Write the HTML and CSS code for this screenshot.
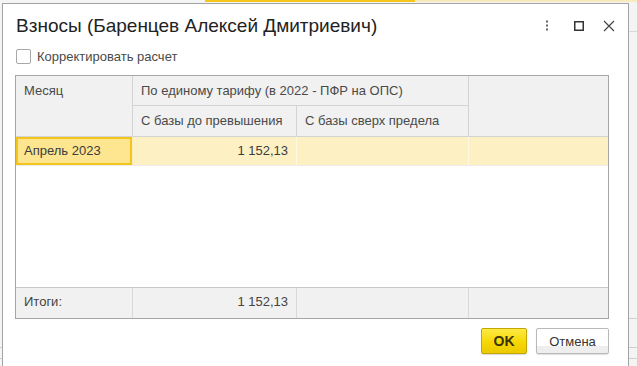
FILE: index.html
```html
<!DOCTYPE html>
<html lang="ru">
<head>
<meta charset="utf-8">
<title>Взносы</title>
<link rel="stylesheet" href="styles.css">
</head>
<body>
<div class="desk">
  <div class="dialog">
    <div class="titlebar">
      <h1 class="title">Взносы (Баренцев Алексей Дмитриевич)</h1>
      <div class="win-icons">
        <span class="icon icon-more">
          <svg width="4" height="12" viewBox="0 0 4 12"><rect x="1" y="0.5" width="2" height="2" fill="#666"/><rect x="1" y="4.5" width="2" height="2" fill="#666"/><rect x="1" y="8.5" width="2" height="2" fill="#666"/></svg>
        </span>
        <span class="icon icon-max">
          <svg width="10" height="10" viewBox="0 0 10 10"><rect x="0.75" y="0.75" width="8.5" height="8.5" fill="none" stroke="#333" stroke-width="1.5"/></svg>
        </span>
        <span class="icon icon-close">
          <svg width="12" height="12" viewBox="0 0 12 12"><path d="M1 1 L11 11 M11 1 L1 11" stroke="#444" stroke-width="1.2" fill="none"/></svg>
        </span>
      </div>
    </div>
    <div class="content">
      <label class="check"><span class="box"></span><span class="check-label">Корректировать расчет</span></label>
      <div class="grid">
        <div class="thead">
          <div class="th th-month">Месяц</div>
          <div class="th th-group">По единому тарифу (в 2022 - ПФР на ОПС)</div>
          <div class="th th-empty"></div>
          <div class="th th-sub1">С базы до превышения</div>
          <div class="th th-sub2">С базы сверх предела</div>
        </div>
        <div class="row">
          <div class="td current">Апрель 2023</div>
          <div class="td num">1 152,13</div>
          <div class="td"></div>
          <div class="td last"></div>
        </div>
        <div class="filler"></div>
        <div class="tfoot">
          <div class="tf">Итоги:</div>
          <div class="tf num">1 152,13</div>
          <div class="tf"></div>
          <div class="tf last"></div>
        </div>
      </div>
      <div class="buttons">
        <button class="btn btn-ok">OK</button>
        <button class="btn btn-cancel">Отмена</button>
      </div>
    </div>
  </div>
</div>
</body>
</html>
```

FILE: styles.css
```css
html, body {
  margin: 0;
  padding: 0;
  height: 366px;
  overflow: hidden;
}
body {
  font-family: "Liberation Sans", Arial, sans-serif;
  background: #f4f4f4;
}
.desk {
  height: 366px;
  box-sizing: border-box;
  padding: 3px 0 0 2px;
  background:
    linear-gradient(#f5c71a, #f5c71a) no-repeat 205px 0 / 210px 2px,
    linear-gradient(#f8ebbb, #f8ebbb) no-repeat 415px 0 / 222px 2px,
    linear-gradient(#d0d0d0, #d0d0d0) no-repeat 0 347px / 2px 1px,
    linear-gradient(#d0d0d0, #d0d0d0) no-repeat 0 358px / 2px 1px,
    linear-gradient(#cfcfcf, #cfcfcf) no-repeat 629px 318px / 8px 1px,
    linear-gradient(#cfcfcf, #cfcfcf) no-repeat 629px 347px / 8px 1px,
    linear-gradient(#cfcfcf, #cfcfcf) no-repeat 629px 358px / 8px 1px,
    linear-gradient(#d8d8d8, #d8d8d8) no-repeat 629px 31px / 8px 1px,
    #f4f4f4;
}
.dialog {
  width: 627px;
  height: 380px;
  box-sizing: border-box;
  border: 1px solid #a3a3a3;
  background: #fff;
}
.titlebar {
  display: flex;
  align-items: flex-start;
  justify-content: space-between;
  padding: 10px 4px 0 13px;
  height: 23px;
}
.title {
  margin: 0;
  font-size: 19px;
  font-weight: normal;
  line-height: 23px;
  color: #222;
  white-space: nowrap;
}
.win-icons {
  display: flex;
  align-items: center;
  height: 23px;
  margin-top: 0;
}
.icon {
  display: flex;
  align-items: center;
  justify-content: center;
  height: 14px;
}
.icon-more { width: 30px; margin-right: 2px; }
.icon-max { width: 30px; }
.icon-close { width: 30px; }

.content {
  padding: 12px 19px 0 12px;
}
.check {
  display: flex;
  align-items: center;
  margin-left: 1px;
  height: 15px;
}
.box {
  width: 15px;
  height: 15px;
  box-sizing: border-box;
  border: 1px solid #a8a8a8;
  border-radius: 2px;
  background: #fff;
}
.check-label {
  margin-left: 6px;
  font-size: 13px;
  color: #4a4a4a;
  line-height: 15px;
}

.grid {
  margin-top: 11px;
  width: 594px;
  height: 244px;
  box-sizing: border-box;
  border: 1px solid #a6a6a6;
  display: flex;
  flex-direction: column;
  font-size: 13px;
  color: #444;
}
.thead {
  display: grid;
  grid-template-columns: 117px 164px 172px 139px;
  grid-template-rows: 30px 31px;
  background: #f0f1f0;
}
.th {
  box-sizing: border-box;
  border-right: 1px solid #d4d4d4;
  border-bottom: 1px solid #d4d4d4;
  padding-left: 8px;
  white-space: nowrap;
  color: #4a4a4a;
}
.th-month {
  grid-row: 1 / 3;
  grid-column: 1;
  line-height: 29px;
}
.th-group {
  grid-row: 1;
  grid-column: 2 / 4;
  line-height: 29px;
}
.th-empty {
  grid-row: 1 / 3;
  grid-column: 4;
  border-right: none;
}
.th-sub1 {
  grid-row: 2;
  grid-column: 2;
  line-height: 30px;
}
.th-sub2 {
  grid-row: 2;
  grid-column: 3;
  line-height: 30px;
}

.row {
  display: grid;
  grid-template-columns: 117px 164px 172px 139px;
  height: 29px;
  box-sizing: border-box;
  border-bottom: 1px solid #ececec;
  background: #fdf1c4;
}
.td {
  box-sizing: border-box;
  border-right: 1px solid #fff8e2;
  padding: 0 8px;
  line-height: 28px;
  color: #3c3c3c;
  white-space: nowrap;
}
.td.last, .tf.last { border-right: none; }
.num { text-align: right; }
.current {
  background: #fde68f;
  box-shadow: inset 0 0 0 2px #f3c41a;
  border-right-color: #fbeebb;
}

.filler {
  flex: 1;
  background: #fff;
}
.tfoot {
  display: grid;
  grid-template-columns: 117px 164px 172px 139px;
  height: 31px;
  box-sizing: border-box;
  border-top: 1px solid #c8c8c8;
  background: #f0f1f0;
}
.tf {
  box-sizing: border-box;
  border-right: 1px solid #d8d8d8;
  padding: 0 8px;
  line-height: 28px;
  color: #444;
  white-space: nowrap;
}

.buttons {
  display: flex;
  justify-content: flex-end;
  gap: 9px;
  margin-top: 9px;
  width: 594px;
}
.btn {
  height: 26px;
  box-sizing: border-box;
  border-radius: 2px;
  font-family: "Liberation Sans", Arial, sans-serif;
  font-size: 13px;
  padding: 0;
  color: #333;
}
.btn-ok {
  width: 46px;
  font-weight: bold;
  font-size: 14px;
  border: 1px solid #c3a600;
  background: linear-gradient(#ffea45, #f5d500 60%, #ecca00);
  box-shadow: 0 1px 1px rgba(0,0,0,0.15);
  color: #3a3300;
}
.btn-cancel {
  width: 73px;
  border: 1px solid #b9b9b9;
  background: linear-gradient(#ffffff, #ffffff 70%, #eeeeee 72%, #eeeeee);
  box-shadow: 0 1px 1px rgba(0,0,0,0.12);
  color: #333;
}
```
